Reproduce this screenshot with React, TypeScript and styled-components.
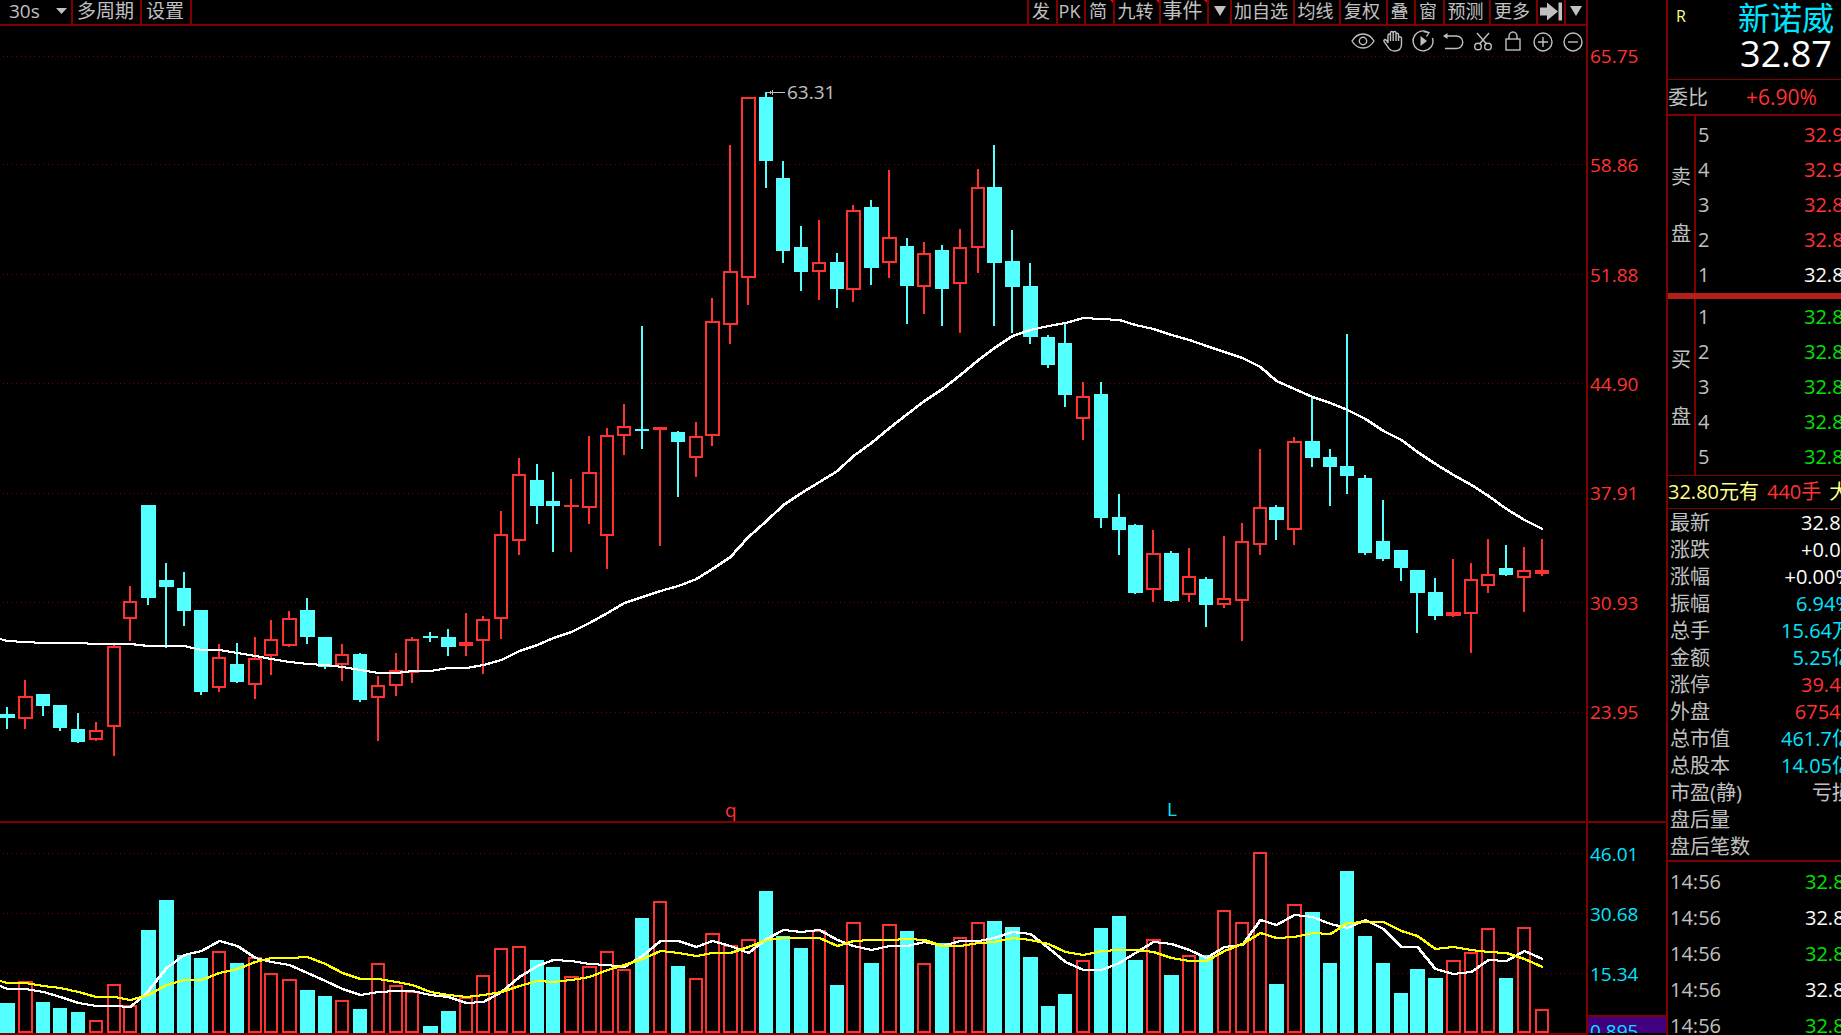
import React from "react";
import styled, { createGlobalStyle } from "styled-components";

const LINE = "#800000";
const RED = "#ff3232";
const CYAN = "#54ffff";
const AQUA = "#00e5ff";
const GREEN = "#00e600";
const GREY = "#c0c0c0";
const YELLOW = "#ffff80";

const GlobalStyle = createGlobalStyle`
  *, *::before, *::after { box-sizing: border-box; }
  body {
    margin: 0;
    background: #000;
    color: ${GREY};
    font-family: "Open Sans", "Noto Sans CJK SC", sans-serif;
    font-size: 20px;
    font-weight: 400;
    overflow: hidden;
  }
  button, select { font: inherit; color: inherit; background: none; border: 0; margin: 0; padding: 0; }
`;

const Page = styled.div`
  display: grid;
  grid-template-columns: minmax(0, 1fr) 80px 175px;
  grid-template-rows: minmax(0, 1fr) 212px;
  height: 100vh;
`;

/* ---------- toolbar ---------- */

const PricePane = styled.main`
  display: flex;
  flex-direction: column;
  min-width: 0;
  border-bottom: 2px solid ${LINE};
`;

const Toolbar = styled.div`
  display: flex;
  flex: none;
  justify-content: space-between;
  height: 26px;
  margin-right: -2px;
  border-right: 2px solid ${LINE};
  border-bottom: 2px solid ${LINE};
`;

const ToolGroup = styled.div`
  display: flex;
`;

const PeriodBox = styled.label`
  display: flex;
  align-items: center;
  width: 73px;
  padding: 0 4px 2px 9px;
  border-right: 2px solid ${LINE};
`;

const PeriodSelect = styled.select`
  flex: 1;
  min-width: 0;
  appearance: none;
  font-size: 19px;
  line-height: 22px;
`;

const MenuButton = styled.button`
  display: flex;
  align-items: center;
  padding: 0 6px 2px 4px;
  border-right: 2px solid ${LINE};
  font-size: 19px;
  line-height: 20px;
  white-space: nowrap;
`;

const ToolButton = styled.button<{ $width: number; $large?: boolean; $flag?: boolean; $icon?: boolean }>`
  position: relative;
  display: flex;
  align-items: center;
  justify-content: center;
  width: ${(p) => p.$width}px;
  padding: ${(p) => (p.$icon ? "0 0 2px" : "0 3px 3px 0")};
  border-left: 2px solid ${LINE};
  font-size: ${(p) => (p.$large ? 20 : 18)}px;
  line-height: 20px;
  white-space: nowrap;
  &::after {
    content: "";
    display: ${(p) => (p.$flag ? "block" : "none")};
    position: absolute;
    top: 0;
    right: 0;
    border-top: 3px solid #ff0000;
    border-left: 3px solid transparent;
  }
`;

const IconBar = styled.div`
  display: flex;
  flex: none;
  justify-content: flex-end;
  height: 30px;
  margin-right: -2px;
`;

const IconButton = styled.button`
  display: flex;
  align-items: center;
  justify-content: center;
  width: 30px;
  height: 30px;
`;

/* ---------- charts ---------- */

const PriceCanvas = styled.div`
  position: relative;
  flex: 1;
  min-height: 0;
`;

const VolumePane = styled.section`
  min-width: 0;
  border-bottom: 2px solid ${LINE};
`;

const Chart = styled.svg`
  display: block;
  width: 100%;
  height: 100%;
`;

const Marker = styled.span<{ $color: string }>`
  position: absolute;
  color: ${(p) => p.$color};
  font-size: 19px;
  line-height: 20px;
  transform: translateY(-50%);
`;

const PriceAxis = styled.aside`
  display: flex;
  flex-direction: column;
  justify-content: space-between;
  padding: 46px 0 99px 2px;
  border-left: 2px solid ${LINE};
  border-bottom: 2px solid ${LINE};
  color: ${RED};
  font-size: 19px;
  line-height: 20px;
`;

const VolumeAxis = styled.aside`
  display: flex;
  flex-direction: column;
  padding-bottom: 2px;
  border-left: 2px solid ${LINE};
  color: ${AQUA};
  font-size: 19px;
  line-height: 20px;
`;

const VolumeTicks = styled.div`
  display: flex;
  flex-direction: column;
  flex: 1;
  gap: 40px;
  padding: 21px 0 0 2px;
`;

const VolumeFoot = styled.div`
  flex: none;
  height: 18px;
  padding-left: 2px;
  border-top: 2px solid ${LINE};
  background: #400080;
  line-height: 28px;
  overflow: hidden;
`;

/* ---------- quote panel ---------- */

const QuotePanel = styled.aside`
  grid-column: 3;
  grid-row: 1 / 3;
  border-left: 2px solid ${LINE};
  overflow: hidden;
`;

const Header = styled.header`
  display: flex;
  height: 80px;
  padding-left: 8px;
  border-bottom: 1px solid ${LINE};
`;

const Flag = styled.span`
  width: 62px;
  padding-top: 6px;
  color: ${YELLOW};
  font-size: 16px;
  line-height: 20px;
`;

const Title = styled.h1`
  margin: 0;
  color: ${AQUA};
  font-size: 32px;
  font-weight: 400;
  line-height: 36px;
  white-space: nowrap;
`;

const Price = styled.div`
  color: #fff;
  font-size: 36px;
  line-height: 36px;
  text-align: center;
`;

const Ratio = styled.div`
  display: flex;
  gap: 38px;
  height: 36px;
  border-bottom: 2px solid ${LINE};
  line-height: 35px;
`;

const RatioValue = styled.span`
  color: ${RED};
  font-size: 21px;
`;

const Value = styled.span<{ $color: string }>`
  color: ${(p) => p.$color};
`;

const Book = styled.section<{ $first?: boolean }>`
  display: flex;
  width: 187px;
  height: ${(p) => (p.$first ? 183 : 177)}px;
  border-bottom: ${(p) => (p.$first ? "6px solid #b22018" : `1px solid ${LINE}`)};
`;

const BookSide = styled.div`
  display: flex;
  flex-direction: column;
  align-items: center;
  justify-content: center;
  gap: 37px;
  width: 28px;
  padding-top: 2px;
  border-right: 2px solid ${LINE};
  line-height: 20px;
`;

const Levels = styled.div<{ $first?: boolean }>`
  flex: 1;
  padding: ${(p) => (p.$first ? 1 : 0)}px 0 0 2px;
`;

const Level = styled.div`
  display: flex;
  justify-content: space-between;
  line-height: 35px;
`;

const Notice = styled.div`
  height: 33px;
  border-bottom: 1px solid ${LINE};
  color: ${YELLOW};
  line-height: 32px;
  white-space: nowrap;
`;

const NoticeLots = styled.span`
  margin: 0 8px;
  color: ${RED};
`;

const Stats = styled.dl`
  width: 184px;
  margin: 0;
  padding-left: 2px;
`;

const Stat = styled.div`
  display: flex;
  justify-content: space-between;
  line-height: 27px;
  white-space: nowrap;
`;

const Term = styled.dt``;

const Detail = styled.dd<{ $color: string }>`
  margin: 0;
  color: ${(p) => p.$color};
`;

const Trades = styled.div`
  padding: 2px 0 0 2px;
  border-top: 2px solid ${LINE};
`;

const Trade = styled.div`
  display: flex;
  justify-content: space-between;
  width: 186px;
  line-height: 36px;
`;

/* ---------- data ---------- */

// left edge of every candle slot
const SLOTS = [
  0, 18, 36, 53, 71, 89, 107, 123, 141, 159, 177, 194, 212, 230, 248, 264, 282, 300, 318, 335, 353, 371,
  389, 405, 423, 441, 459, 476, 494, 512, 530, 546, 564, 582, 600, 617, 635, 653, 671, 689, 705, 723, 741,
  759, 776, 794, 812, 830, 846, 864, 882, 900, 917, 935, 953, 971, 987, 1005, 1023, 1041, 1058, 1076, 1094,
  1112, 1128, 1146, 1164, 1182, 1199, 1217, 1235, 1253, 1269, 1287, 1305, 1323, 1340, 1358, 1376, 1394,
  1410, 1428, 1446, 1464, 1481, 1499, 1517, 1535,
];

// high, body top, body bottom, low, rising, volume top
type Candle = [number, number, number, number, 0 | 1, number];
const CANDLES: Candle[] = [
  [707, 714, 718, 729, 0, 1003], [680, 696, 719, 729, 1, 981], [694, 694, 706, 716, 0, 1002],
  [705, 705, 728, 731, 0, 1008], [713, 729, 742, 743, 0, 1012], [722, 730, 740, 741, 1, 1020],
  [645, 646, 727, 756, 1, 984], [586, 601, 619, 641, 1, 1005], [505, 505, 598, 605, 0, 930],
  [563, 580, 587, 648, 0, 900], [572, 588, 611, 626, 0, 955], [610, 610, 692, 695, 0, 958],
  [644, 657, 688, 692, 1, 951], [643, 664, 682, 683, 0, 963], [637, 658, 685, 699, 1, 957],
  [620, 639, 656, 675, 1, 973], [611, 618, 646, 647, 1, 979], [598, 610, 637, 644, 0, 990],
  [637, 637, 667, 669, 0, 996], [644, 654, 665, 681, 1, 1000], [653, 654, 700, 702, 0, 1009],
  [676, 685, 698, 741, 1, 963], [653, 670, 686, 696, 1, 985], [637, 639, 673, 683, 1, 991],
  [632, 636, 638, 642, 0, 1026], [629, 637, 647, 656, 0, 1011], [613, 642, 646, 656, 1, 997],
  [616, 619, 641, 674, 1, 975], [511, 534, 619, 639, 1, 948], [458, 474, 541, 555, 1, 946],
  [464, 480, 506, 524, 0, 960], [472, 501, 506, 552, 0, 967], [479, 505, 507, 552, 1, 976],
  [436, 472, 508, 524, 1, 966], [428, 435, 536, 569, 1, 951], [404, 426, 436, 455, 1, 969],
  [326, 429, 431, 449, 0, 918], [427, 427, 430, 546, 1, 901], [431, 432, 442, 497, 0, 966],
  [422, 436, 458, 477, 1, 978], [298, 321, 436, 446, 1, 933], [145, 271, 325, 344, 1, 945],
  [97, 97, 278, 305, 1, 939], [92, 97, 161, 188, 0, 891], [161, 178, 251, 263, 0, 936],
  [226, 247, 272, 291, 0, 948], [220, 262, 272, 300, 1, 930], [253, 262, 289, 308, 0, 985],
  [205, 210, 290, 302, 1, 922], [200, 207, 268, 285, 0, 963], [170, 237, 263, 278, 1, 924],
  [238, 246, 286, 324, 0, 931], [242, 253, 287, 314, 1, 963], [245, 250, 289, 326, 0, 943],
  [229, 247, 284, 333, 1, 937], [169, 187, 248, 273, 1, 922], [145, 187, 263, 326, 0, 921],
  [230, 261, 287, 333, 0, 927], [263, 286, 337, 344, 0, 957], [335, 337, 365, 368, 0, 1006],
  [323, 343, 395, 407, 0, 994], [382, 396, 419, 440, 1, 960], [382, 394, 518, 528, 0, 928],
  [494, 517, 530, 555, 0, 916], [524, 525, 593, 594, 0, 960], [530, 553, 590, 602, 1, 939],
  [551, 553, 601, 602, 0, 975], [548, 576, 595, 602, 1, 955], [577, 579, 605, 627, 0, 955],
  [536, 598, 605, 608, 1, 910], [523, 541, 601, 641, 1, 922], [449, 507, 545, 555, 1, 852],
  [505, 507, 520, 540, 0, 984], [437, 441, 530, 545, 1, 904], [397, 441, 458, 467, 0, 912],
  [449, 457, 467, 506, 0, 963], [334, 466, 476, 494, 0, 871], [475, 478, 553, 555, 0, 936],
  [500, 541, 559, 561, 0, 963], [550, 550, 568, 581, 0, 993], [570, 570, 593, 633, 0, 969],
  [578, 592, 616, 620, 0, 978], [559, 612, 616, 617, 1, 960], [563, 579, 614, 653, 1, 952],
  [539, 574, 586, 593, 1, 928], [545, 568, 575, 576, 0, 978], [547, 570, 578, 612, 1, 927],
  [539, 570, 574, 576, 1, 1009],
];

const PRICE_MA = [
  641, 642, 643, 643, 643, 644, 644, 644, 646, 646, 646, 650, 650, 653, 656, 659, 662, 664, 665, 667, 670,
  673, 673, 671, 671, 668, 668, 665, 660, 651, 645, 638, 632, 623, 613, 603, 597, 591, 586, 579, 569, 557,
  537, 521, 505, 493, 482, 471, 456, 443, 428, 414, 401, 389, 375, 360, 348, 336, 330, 326, 323, 318, 319,
  320, 325, 329, 335, 340, 346, 352, 358, 367, 381, 389, 397, 403, 410, 419, 431, 440, 452, 464, 475, 485,
  496, 509, 520, 529,
];

const VOLUME_MA5 = [
  989, 989, 992, 997, 1003, 1006, 1006, 1007, 991, 968, 955, 951, 941, 946, 958, 962, 965, 973, 981, 989,
  995, 992, 991, 991, 995, 997, 1003, 1002, 992, 977, 966, 960, 961, 964, 965, 967, 956, 941, 941, 947, 941,
  946, 953, 939, 930, 932, 930, 940, 946, 950, 946, 946, 942, 946, 941, 941, 938, 932, 934, 948, 962, 970,
  970, 963, 953, 942, 944, 950, 958, 947, 945, 920, 925, 915, 917, 924, 928, 920, 929, 947, 947, 969, 974,
  972, 960, 961, 951, 959,
];

const VOLUME_MA10 = [
  983, 983, 986, 988, 992, 997, 997, 1000, 995, 985, 980, 980, 973, 969, 962, 958, 958, 957, 964, 973, 979,
  979, 982, 985, 992, 995, 997, 995, 992, 986, 981, 982, 980, 977, 970, 965, 959, 951, 953, 956, 953, 953,
  947, 940, 938, 938, 938, 946, 941, 940, 940, 939, 940, 946, 946, 943, 942, 938, 940, 944, 952, 955, 951,
  950, 950, 952, 958, 961, 961, 951, 944, 933, 938, 937, 933, 934, 923, 922, 922, 931, 936, 949, 947, 950,
  952, 953, 959, 967,
];

const slotWidth = (i: number) => ((SLOTS[i + 1] ?? SLOTS[i] + 18) - SLOTS[i] > 17 && i % 8 < 3 ? 15 : 14);

const Bar = ({ x, width, top, bottom, rising }: { x: number; width: number; top: number; bottom: number; rising: boolean }) =>
  rising && bottom - top > 4 ? (
    <rect x={x + 1} y={top + 1} width={width - 2} height={bottom - top - 2} fill="#000" stroke={RED} strokeWidth={2} />
  ) : (
    <rect x={x} y={top} width={width} height={bottom - top} fill={rising ? RED : CYAN} />
  );

// two strokes one pixel apart keep steep stretches as heavy as flat ones
const Average = ({ start, ys, color }: { start: number; ys: number[]; color: string }) => {
  const line = (dx: number) => [`0,${start}`, ...ys.map((y, i) => `${SLOTS[i] + 7 + dx},${y}`)].join(" ");
  return (
    <g fill="none" stroke={color} strokeWidth={2}>
      <polyline points={line(0)} />
      <polyline points={line(1)} />
    </g>
  );
};

const GridLines = ({ rows }: { rows: number[] }) => (
  <g stroke={LINE} strokeDasharray="1 3 1 4">
    {rows.map((y) => (
      <line key={y} x1={3} x2={1584} y1={y + 0.5} y2={y + 0.5} />
    ))}
  </g>
);

const PriceChart = () => (
  <Chart viewBox="0 56 1586 765" preserveAspectRatio="none" shapeRendering="crispEdges" aria-label="K线">
    <GridLines rows={[56, 164, 274, 383, 493, 602, 712]} />
    {CANDLES.map(([high, top, bottom, low, rising], i) => (
      <g key={i}>
        <rect x={SLOTS[i] + 6} y={high} width={2} height={low - high} fill={rising ? RED : CYAN} />
        <Bar x={SLOTS[i]} width={slotWidth(i)} top={top} bottom={bottom} rising={!!rising} />
      </g>
    ))}
    <Average start={639} ys={PRICE_MA} color="#fff" />
    <path d="M767 92.5H785M772 90V95M770 91V94" stroke={GREY} fill="none" />
  </Chart>
);

const VolumeChart = () => (
  <Chart viewBox="0 823 1586 210" preserveAspectRatio="none" shapeRendering="crispEdges" aria-label="成交量">
    <GridLines rows={[853, 913, 973]} />
    {CANDLES.map(([, , , , rising, volume], i) => (
      <Bar key={i} x={SLOTS[i]} width={slotWidth(i)} top={volume} bottom={1033} rising={!!rising} />
    ))}
    <Average start={986} ys={VOLUME_MA5} color="#fff" />
    <Average start={981} ys={VOLUME_MA10} color="#ffff00" />
  </Chart>
);

const MARKERS = [
  { text: "63.31", x: 787, y: 92, color: GREY },
  { text: "q", x: 725, y: 810, color: RED },
  { text: "L", x: 1167, y: 809, color: AQUA },
];

/* ---------- icons ---------- */

const Caret = ({ width, height }: { width: number; height: number }) => (
  <svg width={width} height={height} viewBox="0 0 12 10" preserveAspectRatio="none" aria-hidden>
    <path d="M0 0H12L6 10Z" fill={GREY} />
  </svg>
);

const Glyph = ({ children }: { children: React.ReactNode }) => (
  <svg width="24" height="24" viewBox="0 0 24 24" fill="none" stroke={GREY} strokeWidth="1.4" aria-hidden>
    {children}
  </svg>
);

const ICONS: { label: string; art: React.ReactNode }[] = [
  {
    label: "显示",
    art: (
      <>
        <path d="M1 12C4 7 8 5 12 5S20 7 23 12C20 17 16 19 12 19S4 17 1 12Z" />
        <circle cx="12" cy="12" r="3.7" />
      </>
    ),
  },
  {
    label: "拖动",
    art: (
      <path d="M7 14V6.500Q7 5 8.200 5T9.500 6.500V12V4Q9.500 2.500 10.800 2.500T12.200 4V12V3.500Q12.200 2.500 13.500 2.500T15 4V12V5.500Q15 4.200 16.200 4.200T17.500 5.500V12V9Q17.500 7.700 18.800 7.700T20.500 9V15Q20.500 22 13.500 22Q9 22 7 18L3 12.500Q2.500 11 4 10.500Q5.500 10.500 7 14" />
    ),
  },
  {
    label: "回放",
    art: (
      <>
        <path d="M17.500 3.500A10 10 0 1 0 20 18M12.500 2.500L18 3.500L15.500 7.500M20 18A10 10 0 0 0 21.500 9" />
        <path d="M9.500 7L16 12L9.500 17Z" fill={GREY} stroke="none" />
      </>
    ),
  },
  {
    label: "撤销",
    art: (
      <>
        <path d="M3 7H15.500A6 6 0 0 1 15.500 19.500H4" />
        <path d="M2 7L6.500 4V10Z" fill={GREY} stroke="none" />
      </>
    ),
  },
  {
    label: "剪切",
    art: (
      <>
        <path d="M6 4L15.500 15M18 4L8.500 15" />
        <circle cx="7" cy="17.500" r="3.300" />
        <circle cx="17" cy="17.500" r="3.300" />
      </>
    ),
  },
  {
    label: "锁定",
    art: (
      <>
        <rect x="5" y="10" width="14" height="11" />
        <path d="M8 10V7.500A4 4.500 0 0 1 16 7.500V10" />
      </>
    ),
  },
  {
    label: "放大",
    art: (
      <>
        <circle cx="12" cy="13" r="9" />
        <path d="M7 13H17M12 8V18" />
      </>
    ),
  },
  {
    label: "缩小",
    art: (
      <>
        <circle cx="12" cy="13" r="9" />
        <path d="M7 13H17" />
      </>
    ),
  },
];

const TOOLS: { text?: string; label?: string; art?: React.ReactNode; width: number; large?: boolean; flag?: boolean }[] = [
  { text: "发", width: 29 },
  { text: "PK", width: 28 },
  { text: "简", width: 29, flag: true },
  { text: "九转", width: 46, flag: true },
  { text: "事件", width: 48, large: true, flag: true },
  { label: "事件选项", art: <Caret width={12} height={10} />, width: 23 },
  { text: "加自选", width: 63 },
  { text: "均线", width: 46 },
  { text: "复权", width: 47 },
  { text: "叠", width: 28 },
  { text: "窗", width: 29 },
  { text: "预测", width: 46 },
  { text: "更多", width: 47 },
  {
    label: "移到最后",
    art: (
      <svg width="22" height="19" viewBox="0 0 22 19" aria-hidden>
        <path d="M0 5.500H7V0.500L18 9.500L7 18.500V13.500H0ZM18.500 0.500H22V18.500H18.500Z" fill={GREY} />
      </svg>
    ),
    width: 28,
  },
  { label: "工具选项", art: <Caret width={12} height={10} />, width: 22 },
];

const SELLS = [["5", "32.91", RED], ["4", "32.90", RED], ["3", "32.89", RED], ["2", "32.88", RED], ["1", "32.87", "#fff"]];
const BUYS = [["1", "32.86", GREEN], ["2", "32.85", GREEN], ["3", "32.84", GREEN], ["4", "32.83", GREEN], ["5", "32.82", GREEN]];

const STATS = [
  ["最新", "32.87", "#fff"], ["涨跌", "+0.00", "#fff"], ["涨幅", "+0.00%", "#fff"], ["振幅", "6.94%", AQUA],
  ["总手", "15.64万", AQUA], ["金额", "5.25亿", AQUA], ["涨停", "39.44", RED], ["外盘", "67540", RED],
  ["总市值", "461.7亿", AQUA], ["总股本", "14.05亿", AQUA], ["市盈(静)", "亏损", GREY], ["盘后量", "", GREY],
  ["盘后笔数", "", GREY],
];

const TRADES = [["14:56", "32.86", GREEN], ["14:56", "32.87", "#fff"], ["14:56", "32.86", GREEN], ["14:56", "32.87", "#fff"], ["14:56", "32.86", GREEN]];

const OrderBook = ({ side, rows, first }: { side: string; rows: string[][]; first?: boolean }) => (
  <Book $first={first}>
    <BookSide>
      <span>{side}</span>
      <span>盘</span>
    </BookSide>
    <Levels $first={first}>
      {rows.map(([level, price, color]) => (
        <Level key={level}>
          <span>{level}</span>
          <Value $color={color}>{price}</Value>
        </Level>
      ))}
    </Levels>
  </Book>
);

export default function App() {
  return (
    <>
      <GlobalStyle />
      <Page>
        <PricePane>
          <Toolbar>
            <ToolGroup>
              <PeriodBox>
                <PeriodSelect aria-label="周期" defaultValue="30s">
                  <option>30s</option>
                </PeriodSelect>
                <Caret width={11} height={6} />
              </PeriodBox>
              <MenuButton>多周期</MenuButton>
              <MenuButton>设置</MenuButton>
            </ToolGroup>
            <ToolGroup>
              {TOOLS.map((tool) => (
                <ToolButton
                  key={tool.text ?? tool.label}
                  aria-label={tool.label}
                  $width={tool.width}
                  $large={tool.large}
                  $flag={tool.flag}
                  $icon={!tool.text}
                >
                  {tool.text ?? tool.art}
                </ToolButton>
              ))}
            </ToolGroup>
          </Toolbar>
          <IconBar>
            {ICONS.map((icon) => (
              <IconButton key={icon.label} aria-label={icon.label}>
                <Glyph>{icon.art}</Glyph>
              </IconButton>
            ))}
          </IconBar>
          <PriceCanvas>
            <PriceChart />
            {MARKERS.map((m) => (
              <Marker
                key={m.text}
                $color={m.color}
                style={{ left: `${(m.x / 1586) * 100}%`, top: `${((m.y - 56) / 765) * 100}%` }}
              >
                {m.text}
              </Marker>
            ))}
          </PriceCanvas>
        </PricePane>

        <PriceAxis>
          {["65.75", "58.86", "51.88", "44.90", "37.91", "30.93", "23.95"].map((p) => (
            <span key={p}>{p}</span>
          ))}
        </PriceAxis>

        <VolumePane>
          <VolumeChart />
        </VolumePane>

        <VolumeAxis>
          <VolumeTicks>
            {["46.01", "30.68", "15.34"].map((v) => (
              <span key={v}>{v}</span>
            ))}
          </VolumeTicks>
          <VolumeFoot>0.895</VolumeFoot>
        </VolumeAxis>

        <QuotePanel>
          <Header>
            <Flag>R</Flag>
            <div>
              <Title>新诺威</Title>
              <Price>32.87</Price>
            </div>
          </Header>
          <Ratio>
            <span>委比</span>
            <RatioValue>+6.90%</RatioValue>
          </Ratio>
          <OrderBook side="卖" rows={SELLS} first />
          <OrderBook side="买" rows={BUYS} />
          <Notice>
            32.80元有<NoticeLots>440手</NoticeLots>大
          </Notice>
          <Stats>
            {STATS.map(([term, detail, color]) => (
              <Stat key={term}>
                <Term>{term}</Term>
                <Detail $color={color}>{detail}</Detail>
              </Stat>
            ))}
          </Stats>
          <Trades>
            {TRADES.map(([time, price, color], i) => (
              <Trade key={i}>
                <span>{time}</span>
                <Value $color={color}>{price}</Value>
              </Trade>
            ))}
          </Trades>
        </QuotePanel>
      </Page>
    </>
  );
}
